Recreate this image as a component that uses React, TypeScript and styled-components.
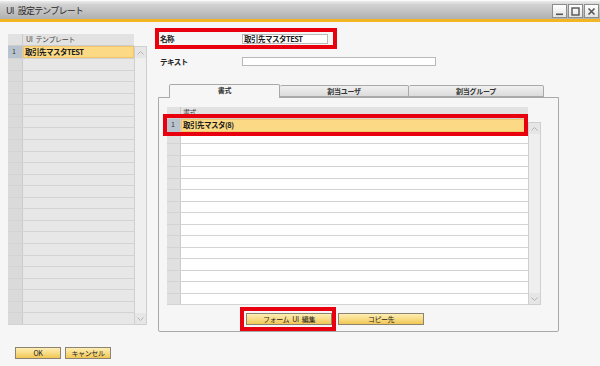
import React from "react";
import styled, { createGlobalStyle } from "styled-components";

const GlobalStyle = createGlobalStyle`
  html, body {
    margin: 0;
    padding: 0;
    background: #f6f6f6;
  }
  body {
    font-family: "Noto Sans CJK JP", "Liberation Sans", sans-serif;
    color: #1a1a1a;
  }
`;

const Window = styled.div`
  width: 600px;
  height: 366px;
  display: flex;
  flex-direction: column;
  background: #f6f6f6;
  overflow: hidden;
`;

const TitleBar = styled.div`
  height: 18px;
  flex: 0 0 auto;
  display: flex;
  align-items: center;
  justify-content: space-between;
  padding-left: 6px;
  padding-right: 1px;
  background: linear-gradient(#ececec 0%, #d2d2d2 20%, #b0b0b0 100%);
  border-top: 1px solid #fafafa;
  border-bottom: 3px solid #f2b624;
`;

const Title = styled.span`
  font-size: 9px;
  letter-spacing: -0.8px;
  word-spacing: 3px;
  color: #2a2a2a;
`;

const WinButtons = styled.div`
  display: flex;
  gap: 1px;
  margin-top: 2px;
`;

const WinButton = styled.div`
  width: 13px;
  height: 12px;
  border: 1px solid #8c8c8c;
  background: linear-gradient(#ffffff, #e4e4e4);
  display: flex;
  align-items: center;
  justify-content: center;
`;

const Body = styled.div`
  flex: 1;
  display: grid;
  grid-template-columns: 147px 1fr;
`;

const LeftColumn = styled.div`
  padding: 12px 0 0 8px;
  display: flex;
  flex-direction: column;
`;

const RightColumn = styled.div`
  padding: 6px 0 0 8px;
  display: flex;
  flex-direction: column;
`;

const GridBox = styled.div<{ $w: number; $h: number }>`
  width: ${(p) => p.$w}px;
  height: ${(p) => p.$h}px;
  display: grid;
  grid-template-columns: 1fr 13px;
  grid-template-rows: 12px 1fr;
`;

const HeaderRow = styled.div`
  grid-column: 1;
  grid-row: 1;
  display: flex;
  background: #e2e2e2;
  border-bottom: 1px solid #cdcdcd;
  box-sizing: border-box;
`;

const NumCell = styled.div<{ $w: number; $sel?: boolean; $tone?: string }>`
  flex: 0 0 ${(p) => p.$w}px;
  box-sizing: border-box;
  background: ${(p) => (p.$sel ? "#b9c3cd" : p.$tone || "#dadada")};
  border-right: 1px solid #cbcbcb;
  font-size: 7px;
  line-height: 11px;
  padding-left: 4px;
  color: #333;
  overflow: hidden;
`;

const HeaderText = styled.div<{ $pad: number }>`
  flex: 1;
  font-size: 7px;
  letter-spacing: -0.4px;
  word-spacing: 2px;
  line-height: 11px;
  padding-left: ${(p) => p.$pad}px;
  color: #444;
`;

const Rows = styled.div`
  grid-column: 1;
  grid-row: 2;
  display: flex;
  flex-direction: column;
`;

const Row = styled.div<{ $fixed?: number; $mark?: boolean }>`
  flex: ${(p) => (p.$fixed ? `0 0 ${p.$fixed}px` : "1 1 0")};
  display: flex;
  box-sizing: border-box;
  border-bottom: 1px solid #d3d3d3;
  position: relative;
  ${(p) =>
    p.$mark &&
    `
    z-index: 2;
    &::after {
      content: "";
      position: absolute;
      left: -4px;
      right: 0;
      top: -5px;
      bottom: -4px;
      border: 4px solid #e8000e;
    }
  `}
`;

const Cell = styled.div<{ $bg: string; $sel?: boolean }>`
  flex: 1;
  background: ${(p) => (p.$sel ? "#fbd985" : p.$bg)};
  ${(p) => p.$sel && "border: 1px solid #f3c56a; box-sizing: border-box;"}
  font-size: 7.5px;
  font-weight: 700;
  letter-spacing: -0.5px;
  line-height: 10px;
  padding-left: 1px;
  color: #1a1a1a;
  white-space: nowrap;
`;

const Scrollbar = styled.div<{ $top?: number }>`
  grid-column: 2;
  grid-row: 2;
  margin-top: ${(p) => p.$top || 0}px;
  box-sizing: border-box;
  border: 1px solid #cfcfcf;
  background: #efefef;
  display: flex;
  flex-direction: column;
  justify-content: space-between;
`;

const ScrollArrow = styled.div`
  height: 11px;
  display: flex;
  align-items: center;
  justify-content: center;
  background: #e6e6e6;
`;

const FooterButtons = styled.div`
  display: flex;
  gap: 4px;
  margin-top: 22px;
  padding-left: 7px;
`;

const YellowButton = styled.button<{ $w: number }>`
  width: ${(p) => p.$w}px;
  height: 12px;
  padding: 0;
  border: 1px solid #8d8372;
  background: linear-gradient(#fdeeb4 0%, #f9dc86 50%, #f1c654 100%);
  font-family: "Noto Sans CJK JP", sans-serif;
  font-size: 7px;
  letter-spacing: -0.4px;
  word-spacing: 2px;
  line-height: 10px;
  color: #222;
`;

const FieldRow = styled.div<{ $mark?: boolean }>`
  display: flex;
  align-items: center;
  width: fit-content;
  height: 21px;
  box-sizing: border-box;
  border: 4px solid ${(p) => (p.$mark ? "#e8000e" : "transparent")};
  padding: 0 5px 0 1px;
  & + & {
    margin-top: 2px;
  }
`;

const FieldLabel = styled.div`
  width: 82px;
  font-size: 7.5px;
  font-weight: 700;
  letter-spacing: -0.5px;
  color: #222;
`;

const TextInput = styled.div<{ $w: number; $h: number }>`
  width: ${(p) => p.$w}px;
  height: ${(p) => p.$h}px;
  box-sizing: border-box;
  border: 1px solid #b9b9b9;
  background: #fff;
  font-size: 7.5px;
  font-weight: 700;
  letter-spacing: -0.5px;
  line-height: 8px;
  padding-left: 1px;
  white-space: nowrap;
`;

const TabArea = styled.div`
  margin: 12px 0 0 3px;
  width: 401px;
`;

const TabStrip = styled.div`
  display: flex;
  align-items: flex-end;
  height: 13px;
  padding-left: 11px;
`;

const Tab = styled.div<{ $w: number; $active?: boolean }>`
  width: ${(p) => p.$w}px;
  height: ${(p) => (p.$active ? 14 : 12)}px;
  box-sizing: border-box;
  border: 1px solid #a9a9a9;
  border-bottom: ${(p) => (p.$active ? "none" : "1px solid #a9a9a9")};
  border-left: ${(p) => (p.$active ? "1px solid #a9a9a9" : "none")};
  border-radius: 2px 2px 0 0;
  background: ${(p) => (p.$active ? "#f6f6f6" : "linear-gradient(#f0f0f0, #dcdcdc)")};
  font-size: 7px;
  font-weight: 700;
  letter-spacing: -0.3px;
  line-height: 11px;
  text-align: center;
  color: #333;
  position: relative;
  z-index: ${(p) => (p.$active ? 1 : 0)};
  margin-bottom: ${(p) => (p.$active ? -1 : 0)}px;
`;

const Panel = styled.div`
  height: 235px;
  box-sizing: border-box;
  border: 1px solid #a9a9a9;
  border-radius: 0 0 2px 2px;
  padding: 9px 0 0 8px;
  display: flex;
  flex-direction: column;
`;

const ActionRow = styled.div`
  display: flex;
  align-items: center;
  margin-top: 2px;
  padding-left: 73px;
  gap: 2px;
`;

const MarkBox = styled.div`
  border: 4px solid #e8000e;
  padding: 2px 0 2px 2px;
  display: flex;
`;

const Chevron = ({ up }: { up?: boolean }) => (
  <svg width="7" height="4" viewBox="0 0 7 4">
    <path d={up ? "M0.5 3.5 L3.5 0.5 L6.5 3.5" : "M0.5 0.5 L3.5 3.5 L6.5 0.5"} fill="none" stroke="#b4b4b4" strokeWidth="1" />
  </svg>
);

const App: React.FC = () => {
  const leftRows = Array.from({ length: 24 }, (_, i) => i);
  const innerRows = Array.from({ length: 15 }, (_, i) => i);

  return (
    <Window>
      <GlobalStyle />
      <TitleBar>
        <Title>UI 設定テンプレート</Title>
        <WinButtons>
          <WinButton>
            <svg width="9" height="9" viewBox="0 0 9 9">
              <rect x="1" y="6.5" width="7" height="1.6" fill="#555" />
            </svg>
          </WinButton>
          <WinButton>
            <svg width="9" height="9" viewBox="0 0 9 9">
              <rect x="1" y="1" width="7" height="7" fill="none" stroke="#555" strokeWidth="1.4" />
            </svg>
          </WinButton>
          <WinButton>
            <svg width="9" height="9" viewBox="0 0 9 9">
              <path d="M1.5 1.5 L7.5 7.5 M7.5 1.5 L1.5 7.5" stroke="#555" strokeWidth="1.6" />
            </svg>
          </WinButton>
        </WinButtons>
      </TitleBar>

      <Body>
        <LeftColumn>
          <GridBox $w={139} $h={291}>
            <HeaderRow>
              <NumCell $w={15} $tone="#e2e2e2" />
              <HeaderText $pad={3}>UI テンプレート</HeaderText>
            </HeaderRow>
            <Rows>
              {leftRows.map((i) => (
                <Row key={i}>
                  <NumCell $w={15} $sel={i === 0}>{i === 0 ? "1" : ""}</NumCell>
                  <Cell $bg="#e7e7e7" $sel={i === 0}>{i === 0 ? "取引先マスタTEST" : ""}</Cell>
                </Row>
              ))}
            </Rows>
            <Scrollbar>
              <ScrollArrow><Chevron up /></ScrollArrow>
              <ScrollArrow><Chevron /></ScrollArrow>
            </Scrollbar>
          </GridBox>
          <FooterButtons>
            <YellowButton $w={46}>OK</YellowButton>
            <YellowButton $w={46}>キャンセル</YellowButton>
          </FooterButtons>
        </LeftColumn>

        <RightColumn>
          <FieldRow $mark>
            <FieldLabel>名称</FieldLabel>
            <TextInput $w={86} $h={10}>取引先マスタTEST</TextInput>
          </FieldRow>
          <FieldRow>
            <FieldLabel>テキスト</FieldLabel>
            <TextInput $w={194} $h={9} />
          </FieldRow>

          <TabArea>
            <TabStrip>
              <Tab $w={111} $active>書式</Tab>
              <Tab $w={129}>割当ユーザ</Tab>
              <Tab $w={135}>割当グループ</Tab>
            </TabStrip>
            <Panel>
              <GridBox $w={374} $h={198}>
                <HeaderRow>
                  <NumCell $w={14} $tone="#e2e2e2" />
                  <HeaderText $pad={2}>書式</HeaderText>
                </HeaderRow>
                <Rows>
                  <Row $fixed={14} $mark>
                    <NumCell $w={14} $sel>1</NumCell>
                    <Cell $bg="#fff" $sel>取引先マスタ(8)</Cell>
                  </Row>
                  {innerRows.map((i) => (
                    <Row key={i}>
                      <NumCell $w={14} $tone="#e0e0e0" />
                      <Cell $bg="#fff" />
                    </Row>
                  ))}
                </Rows>
                <Scrollbar $top={3}>
                  <ScrollArrow><Chevron up /></ScrollArrow>
                  <ScrollArrow><Chevron /></ScrollArrow>
                </Scrollbar>
              </GridBox>
              <ActionRow>
                <MarkBox>
                  <YellowButton $w={86}>フォーム UI 編集</YellowButton>
                </MarkBox>
                <YellowButton $w={86}>コピー先</YellowButton>
              </ActionRow>
            </Panel>
          </TabArea>
        </RightColumn>
      </Body>
    </Window>
  );
};

export default App;
